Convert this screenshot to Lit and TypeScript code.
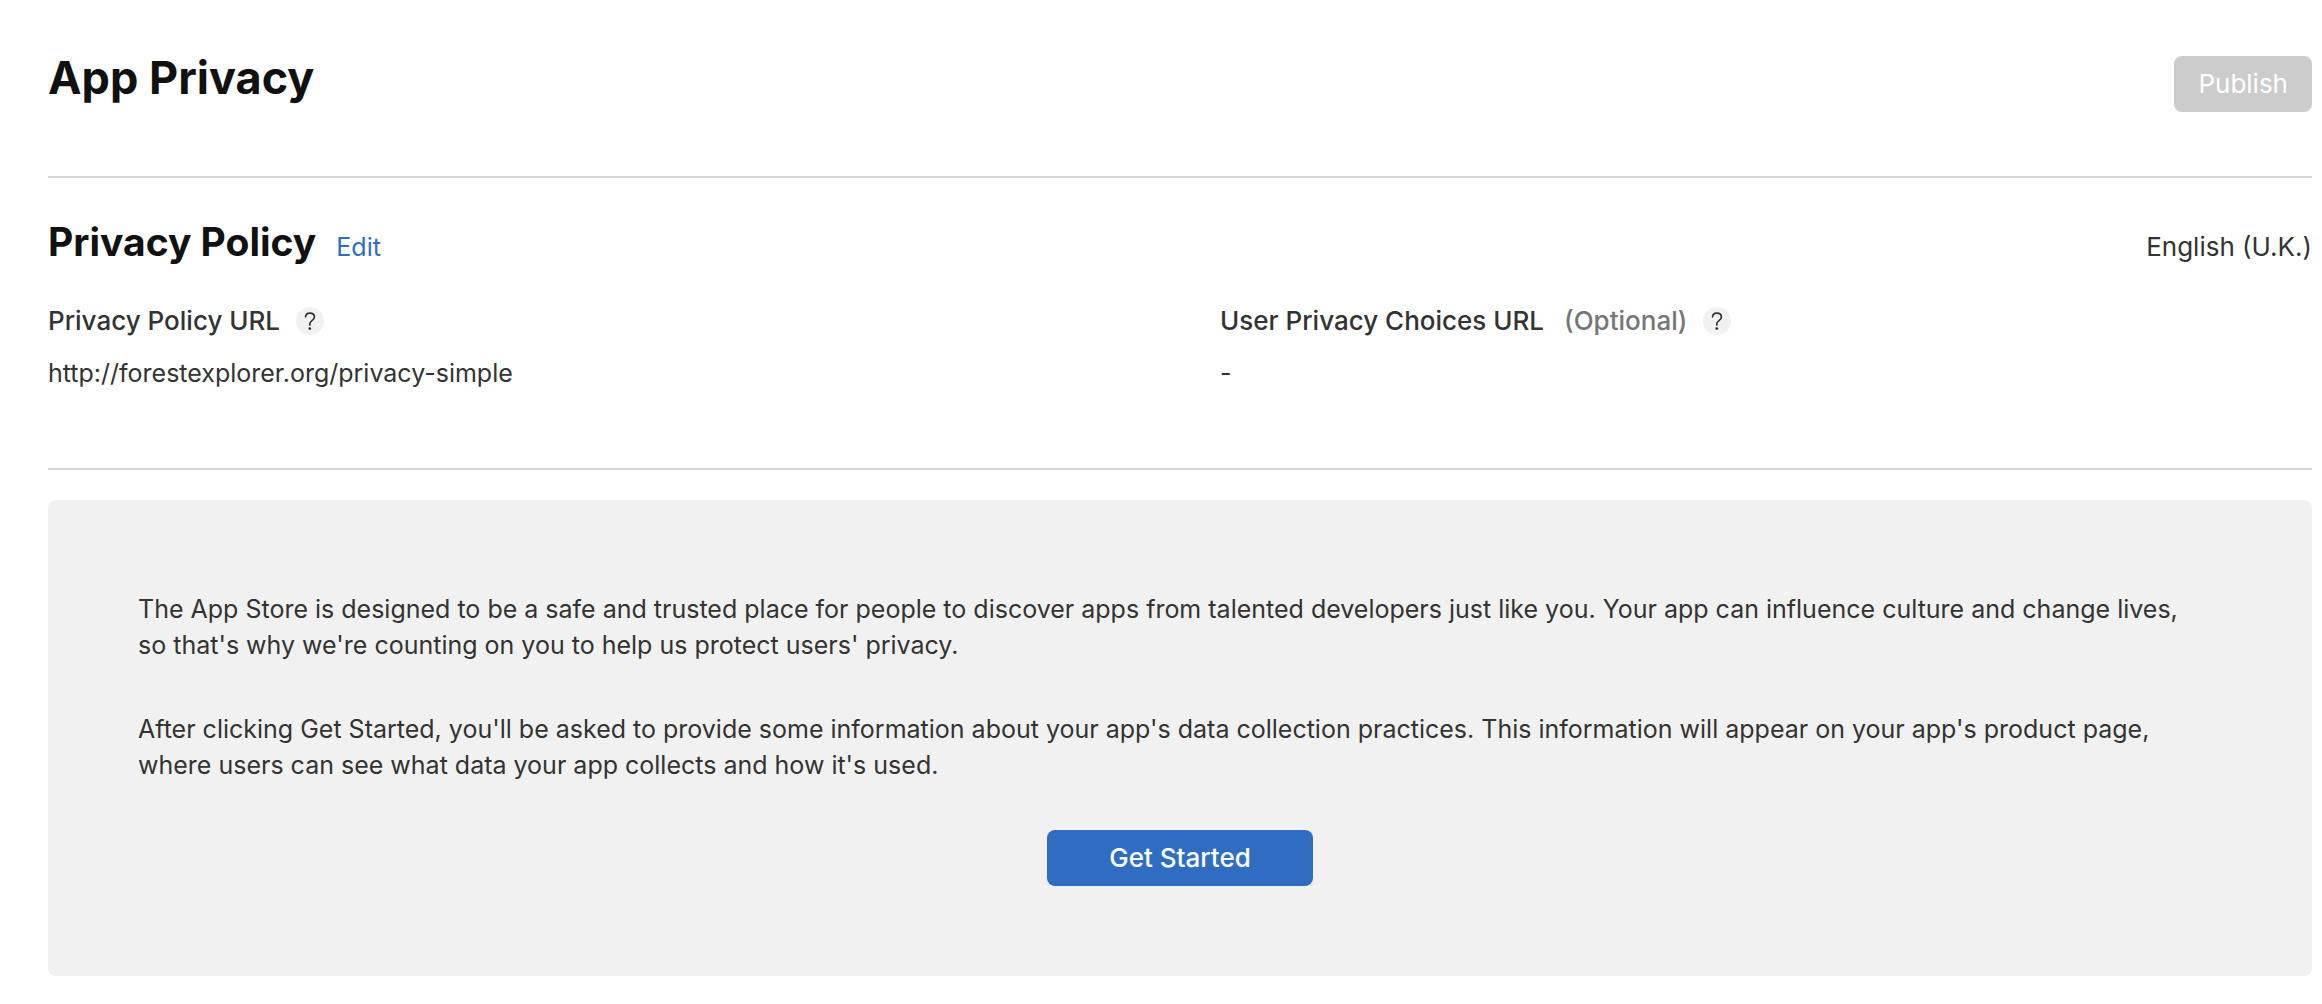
import { LitElement, html, css } from "lit";
import { customElement, property } from "lit/decorators.js";

@customElement("help-button")
class HelpButton extends LitElement {
  @property() label = "";

  static styles = css`
    :host {
      display: inline-flex;
    }
    .help {
      display: flex;
      align-items: center;
      justify-content: center;
      width: 28px;
      height: 28px;
      padding: 0;
      border: 0;
      border-radius: 50%;
      background: #f1f1f1;
      color: #333;
      cursor: pointer;
    }
    .mark {
      width: 28px;
      height: 28px;
    }
  `;

  render() {
    return html`<button class="help" type="button" aria-label=${this.label}>
      <svg class="mark" viewBox="0 0 28 28" fill="none" aria-hidden="true">
        <path
          d="M9.6 9.8C9.7 7.6 11.4 6.1 13.9 6.1C16.5 6.1 18.4 7.6 18.4 9.9C18.4 11.6 17.5 12.6 16 13.6C14.4 14.7 13.8 15.5 13.8 17V18"
          stroke="currentColor"
          stroke-width="1.7"
          stroke-linecap="round"
        />
        <circle cx="13.8" cy="21.6" r="1.4" fill="currentColor" />
      </svg>
    </button>`;
  }
}

@customElement("app-root")
class AppRoot extends LitElement {
  static styles = css`
    :host {
      display: block;
      box-sizing: border-box;
      padding: 48px 10px 28px 48px;
      background: #fff;
      color: #333;
      font-family: Inter, "Liberation Sans", sans-serif;
      font-size: 25px;
      line-height: 36px;
    }
    h1,
    h2,
    p,
    dl,
    dd {
      margin: 0;
    }
    .header {
      display: flex;
      align-items: flex-start;
      justify-content: space-between;
      height: 128px;
      border-bottom: 2px solid #d6d6d6;
    }
    .title {
      color: #111;
      font-size: 45px;
      line-height: 59px;
      font-weight: 700;
    }
    .button {
      height: 56px;
      padding: 0 24px;
      border: 0;
      border-radius: 8px;
      background: #2f6dc3;
      color: #fff;
      font: inherit;
      font-size: 26px;
      cursor: pointer;
    }
    .publish {
      margin-top: 8px;
      background: #ccc;
      cursor: default;
    }
    .policy {
      padding: 37px 0 77px;
      border-bottom: 2px solid #d6d6d6;
    }
    .policy-head {
      display: flex;
      align-items: baseline;
      gap: 20px;
    }
    .section-title {
      color: #111;
      font-size: 39px;
      line-height: 53px;
      font-weight: 700;
    }
    .edit {
      color: #2f6dc3;
      text-decoration: none;
    }
    .language {
      margin-left: auto;
      font-size: 26px;
    }
    .fields {
      display: grid;
      grid-template-columns: 1fr 1fr;
      gap: 80px;
      padding-top: 35px;
    }
    .term {
      display: flex;
      align-items: center;
      font-size: 26px;
      font-weight: 500;
    }
    .optional {
      margin-left: 20px;
      color: #767676;
    }
    .help {
      margin-left: 16px;
    }
    .value {
      padding-top: 16px;
    }
    .panel {
      display: flex;
      flex-direction: column;
      margin-top: 30px;
      padding: 91px 90px 90px;
      border-radius: 8px;
      background: #f1f1f1;
    }
    .intro {
      padding-right: 20px;
    }
    .intro + .intro {
      margin-top: 48px;
    }
    .start {
      align-self: center;
      margin-top: 47px;
      padding: 0 62px;
      font-weight: 500;
    }
  `;

  render() {
    return html`
      <header class="header">
        <h1 class="title">App Privacy</h1>
        <button class="button publish" type="button" disabled>Publish</button>
      </header>
      <main>
        <section class="policy">
          <div class="policy-head">
            <h2 class="section-title">Privacy Policy</h2>
            <a class="edit" href="#edit">Edit</a>
            <span class="language">English (U.K.)</span>
          </div>
          <dl class="fields">
            <div>
              <dt class="term">
                Privacy Policy URL
                <help-button class="help" label="About the privacy policy URL"></help-button>
              </dt>
              <dd class="value">http://forestexplorer.org/privacy-simple</dd>
            </div>
            <div>
              <dt class="term">
                User Privacy Choices URL
                <span class="optional">(Optional)</span>
                <help-button class="help" label="About the user privacy choices URL"></help-button>
              </dt>
              <dd class="value">-</dd>
            </div>
          </dl>
        </section>
        <section class="panel">
          <p class="intro">
            The App Store is designed to be a safe and trusted place for people to discover apps from talented
            developers just like you. Your app can influence culture and change lives, so that's why we're counting on
            you to help us protect users' privacy.
          </p>
          <p class="intro">
            After clicking Get Started, you'll be asked to provide some information about your app's data collection
            practices. This information will appear on your app's product page, where users can see what data your app
            collects and how it's used.
          </p>
          <button class="button start" type="button">Get Started</button>
        </section>
      </main>
    `;
  }
}
